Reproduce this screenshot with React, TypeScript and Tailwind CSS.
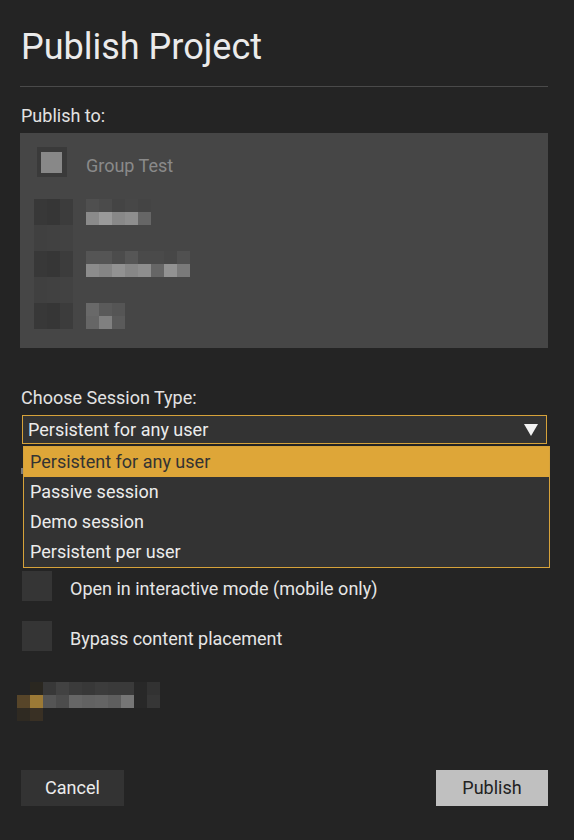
import React from "react";

const A = ["bg-[#383838]", "bg-[#363636]", "bg-[#3c3c3c]"];
const L = ["bg-[#404040]", "bg-[#414141]", "bg-[#424242]"];

const panelMosaic: string[][] = [
  [...A, "", "bg-[#4f4f4f]", "bg-[#4b4b4b]", "bg-[#444444]", "bg-[#474747]", "bg-[#444444]"],
  [...A, "", "bg-[#8a8a8a]", "bg-[#9a9a9a]", "bg-[#888888]", "bg-[#8e8e8e]", "bg-[#666666]"],
  [...L],
  [...L],
  [...A, "", "bg-[#555555]", "bg-[#555555]", "bg-[#4c4c4c]", "bg-[#565656]", "bg-[#4a4a4a]", "bg-[#4a4a4a]", "bg-[#474747]", "bg-[#505050]"],
  [...A, "", "bg-[#8c8c8c]", "bg-[#858585]", "bg-[#929292]", "bg-[#878787]", "bg-[#8e8e8e]", "bg-[#666666]", "bg-[#929292]", "bg-[#7a7a7a]"],
  [...L],
  [...L],
  [...A, "", "bg-[#696969]", "bg-[#5a5a5a]", "bg-[#555555]"],
  [...A, "", "bg-[#666666]", "bg-[#808080]", "bg-[#5a5a5a]"],
];

const bottomMosaic: string[][] = [
  ["", "bg-[#2a2720]", "bg-[#383838]", "bg-[#424242]", "bg-[#3b3b3b]", "bg-[#383838]", "bg-[#3c3c3c]", "bg-[#3a3a3a]", "bg-[#3a3a3a]", "bg-[#282828]", "bg-[#323232]"],
  ["bg-[#574529]", "bg-[#9c7a36]", "bg-[#555555]", "bg-[#4c4c4c]", "bg-[#666666]", "bg-[#626262]", "bg-[#646464]", "bg-[#5e5e5e]", "bg-[#767676]", "bg-[#282828]", "bg-[#363636]"],
  ["bg-[#2f2a22]", "bg-[#393024]"],
];

function Mosaic({ rows, className }: { rows: string[][]; className?: string }) {
  return (
    <div className={"flex flex-col " + (className ?? "")}>
      {rows.map((r, i) => (
        <div key={i} className="flex h-[13px]">
          {r.map((c, j) => (
            <div key={j} className={"w-[13px] h-[13px] " + c} />
          ))}
        </div>
      ))}
    </div>
  );
}

const options = ["Persistent for any user", "Passive session", "Demo session", "Persistent per user"];

export default function App() {
  return (
    <div className="min-h-[840px] bg-[#242424] font-['Roboto','Liberation_Sans',sans-serif] pl-[20px] pr-[26px] pt-[26px] flex flex-col">
      <h1 className="text-[36px] leading-[42px] font-normal text-[#ebebeb] pl-[1px]">Publish Project</h1>
      <div className="mt-[18px] h-px bg-[#4a4a4a]" />
      <div className="mt-[17px] text-[18px] leading-[24px] text-[#e2e2e2] pl-[1px]">Publish to:</div>

      <div className="mt-[5px] h-[215px] bg-[#464646] pt-[14px] flex flex-col">
        <div className="flex items-start ml-[17px]">
          <div className="w-[30px] h-[30px] bg-[#3a3a3a] pl-[4px] pt-[5px]">
            <div className="w-[21px] h-[21px] bg-[#888888]" />
          </div>
          <span className="ml-[19px] mt-[7px] text-[18px] leading-[24px] text-[#8a8a8a]">Group Test</span>
        </div>
        <Mosaic rows={panelMosaic} className="ml-[14px] mt-[21px]" />
      </div>

      <div className="mt-[38px] text-[18px] leading-[24px] text-[#e2e2e2] pl-[1px]">Choose Session Type:</div>

      <div className="relative z-10 mt-[5px] ml-[2px] mr-[1px]">
        <div className="h-[29px] border border-[#d6a23a] bg-[#333333] flex items-center pl-[5px] pr-[8px]">
          <span className="flex-1 text-[18px] leading-[24px] text-[#ececec]">Persistent for any user</span>
          <svg width="14" height="12" viewBox="0 0 14 12" className="block">
            <polygon points="0,0 14,0 7,12" fill="#f2f2f2" />
          </svg>
        </div>
        <div className="absolute top-[31px] left-[1px] right-[-3px] border border-[#d6a23a] bg-[#333333] flex flex-col">
          {options.map((o, i) => (
            <div
              key={o}
              className={
                "h-[30px] flex items-center pl-[6px] text-[18px] leading-[24px] " +
                (i === 0 ? "bg-[#dea638] text-[#333333]" : "text-[#ececec]")
              }
            >
              {o}
            </div>
          ))}
        </div>
      </div>

      <div className="mt-[24px] ml-[1px] w-[2px] h-[6px] bg-[#7a7a7a]" />

      <div className="mt-[97px] flex flex-col gap-[20px]">
        {["Open in interactive mode (mobile only)", "Bypass content placement"].map((t) => (
          <div key={t} className="flex items-start ml-[2px]">
            <div className="w-[30px] h-[30px] bg-[#353535]" />
            <span className="ml-[18px] mt-[6px] text-[18px] leading-[24px] text-[#e6e6e6]">{t}</span>
          </div>
        ))}
      </div>

      <Mosaic rows={bottomMosaic} className="-ml-[3px] mt-[31px]" />

      <div className="mt-[49px] flex justify-between">
        <button className="ml-[1px] w-[103px] h-[36px] bg-[#333333] text-[18px] leading-[24px] text-[#ececec] flex items-center justify-center">
          Cancel
        </button>
        <button className="w-[112px] h-[36px] bg-[#c0c0c0] text-[18px] leading-[24px] text-[#222222] flex items-center justify-center">
          Publish
        </button>
      </div>
    </div>
  );
}
